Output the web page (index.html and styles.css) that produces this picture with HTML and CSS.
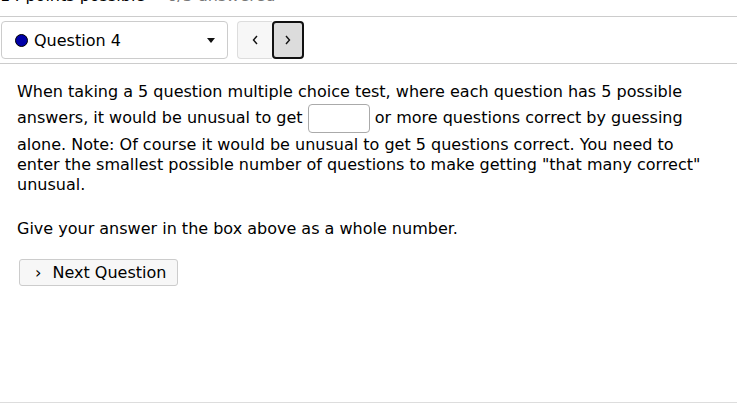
FILE: index.html
```html
<!DOCTYPE html>
<html>
<head>
<meta charset="utf-8">
<link rel="stylesheet" href="styles.css">
</head>
<body>
<div class="header"><span class="points">14 points possible</span><span class="answered">0/3 answered</span></div>
<div class="navrow">
  <div class="qselect">
    <span class="dot"></span>
    <span class="qlabel">Question 4</span>
    <span class="caret"></span>
  </div>
  <div class="navbtns">
    <button class="navbtn prev"><svg width="8" height="12" viewBox="0 0 8 12"><path d="M6 2 L2.5 6 L6 10" fill="none" stroke="#111" stroke-width="1.4"/></svg></button>
    <button class="navbtn next"><svg width="8" height="12" viewBox="0 0 8 12"><path d="M2 2 L5.5 6 L2 10" fill="none" stroke="#111" stroke-width="1.4"/></svg></button>
  </div>
</div>
<div class="question">
  <p class="qtext">When taking a 5 question multiple choice test, where each question has 5 possible answers, it would be unusual to get <input class="answer" type="text"> or more questions correct by guessing alone. Note: Of course it would be unusual to get 5 questions correct. You need to enter the smallest possible number of questions to make getting "that many correct" unusual.</p>
  <p class="qtext last">Give your answer in the box above as a whole number.</p>
  <button class="nextq"><span class="chev">&#8250;</span> Next Question</button>
</div>
<div class="footer"></div>
</body>
</html>
```
FILE: styles.css
```css
html, body { margin: 0; padding: 0; background: #fff; }
body {
  font-family: "DejaVu Sans", sans-serif;
  font-size: 16px;
  color: #000;
  width: 737px;
  height: 410px;
  overflow: hidden;
}
.header {
  margin-top: -14px;
  height: 30px;
  line-height: 20px;
  font-size: 16px;
  border-bottom: 1px solid #ccc;
  white-space: nowrap;
}
.points { margin-right: 22px; }
.answered { color: #777; }
.navrow {
  display: flex;
  align-items: center;
  gap: 9px;
  padding: 4px 0 4px 1px;
  border-bottom: 1px solid #ccc;
}
.qselect {
  width: 212px;
  height: 36px;
  border: 1px solid #ccc;
  border-radius: 4px;
  display: flex;
  align-items: center;
  padding-left: 13px;
}
.dot {
  width: 11px; height: 11px;
  border-radius: 50%;
  background: #0000a8;
  border: 1px solid #000;
  margin-right: 6px;
}
.qlabel { font-size: 16px; flex: 1; }
.caret {
  width: 0; height: 0;
  border-left: 4px solid transparent;
  border-right: 4px solid transparent;
  border-top: 5px solid #111;
  margin-right: 12px;
}
.navbtns { display: flex; }
.navbtn {
  height: 38px;
  display: flex; align-items: center; justify-content: center;
  padding: 0;
}
.navbtn.prev {
  width: 35px;
  background: #f7f7f7;
  border: 1px solid #ddd;
  border-right: none;
  border-radius: 4px 0 0 4px;
}
.navbtn.next {
  width: 32px;
  background: #dcdcdc;
  border: 2px solid #111;
  border-radius: 4px;
}
.question { padding: 0 28px 0 17px; }
.qtext {
  margin: 18px 0 24px;
  line-height: 20px;
}
.qtext.last { margin-bottom: 20px; }
.answer {
  width: 62px;
  height: 29px;
  box-sizing: border-box;
  border: 1px solid #aaa;
  border-radius: 4px;
  vertical-align: middle;
  margin: 2px 0;
  padding: 0;
}
.nextq {
  margin-left: 2px;
  width: 159px;
  height: 27px;
  font-family: inherit;
  font-size: 16px;
  color: #000;
  background: #f7f7f7;
  border: 1px solid #ccc;
  border-radius: 3px;
  text-align: left;
  padding: 0 0 0 15px;
}
.chev { margin-right: 6px; }
.footer {
  position: absolute;
  left: 0; right: 0; top: 402px;
  border-top: 1px solid #ddd;
}
```
